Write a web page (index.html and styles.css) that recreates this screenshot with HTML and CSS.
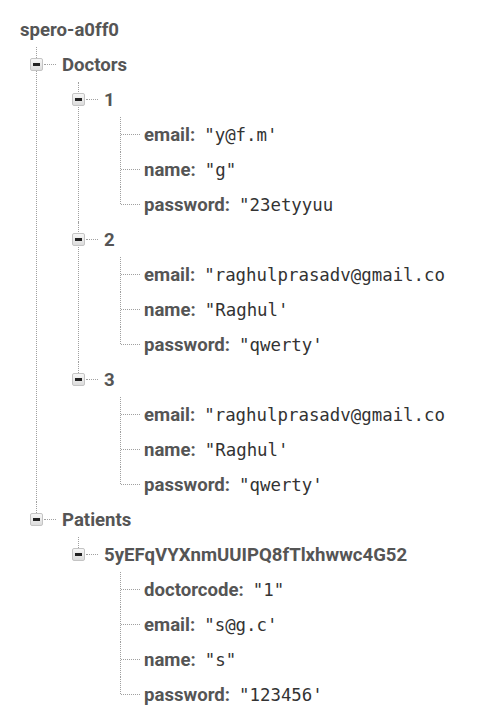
FILE: index.html
```html
<!DOCTYPE html>
<html>
<head>
<meta charset="utf-8">
<link rel="stylesheet" href="styles.css">
</head>
<body>
<div class="tree">
  <div class="row root-row"><span class="key">spero-a0ff0</span></div>
  <ul class="children lvl1">
    <li class="node">
      <div class="row"><span class="toggle"></span><span class="dots"></span><span class="key">Doctors</span></div>
      <ul class="children">
        <li class="node">
          <div class="row"><span class="toggle"></span><span class="dots"></span><span class="key">1</span></div>
          <ul class="children">
            <li class="leaf"><div class="row"><span class="key">email:</span><span class="val">"y@f.m'</span></div></li>
            <li class="leaf"><div class="row"><span class="key">name:</span><span class="val">"g"</span></div></li>
            <li class="leaf"><div class="row"><span class="key">password:</span><span class="val">"23etyyuu</span></div></li>
          </ul>
        </li>
        <li class="node">
          <div class="row"><span class="toggle"></span><span class="dots"></span><span class="key">2</span></div>
          <ul class="children">
            <li class="leaf"><div class="row"><span class="key">email:</span><span class="val">"raghulprasadv@gmail.co</span></div></li>
            <li class="leaf"><div class="row"><span class="key">name:</span><span class="val">"Raghul'</span></div></li>
            <li class="leaf"><div class="row"><span class="key">password:</span><span class="val">"qwerty'</span></div></li>
          </ul>
        </li>
        <li class="node">
          <div class="row"><span class="toggle"></span><span class="dots"></span><span class="key">3</span></div>
          <ul class="children">
            <li class="leaf"><div class="row"><span class="key">email:</span><span class="val">"raghulprasadv@gmail.co</span></div></li>
            <li class="leaf"><div class="row"><span class="key">name:</span><span class="val">"Raghul'</span></div></li>
            <li class="leaf"><div class="row"><span class="key">password:</span><span class="val">"qwerty'</span></div></li>
          </ul>
        </li>
      </ul>
    </li>
    <li class="node">
      <div class="row"><span class="toggle"></span><span class="dots"></span><span class="key">Patients</span></div>
      <ul class="children">
        <li class="node">
          <div class="row"><span class="toggle"></span><span class="dots"></span><span class="key">5yEFqVYXnmUUIPQ8fTlxhwwc4G52</span></div>
          <ul class="children">
            <li class="leaf"><div class="row"><span class="key">doctorcode:</span><span class="val">"1"</span></div></li>
            <li class="leaf"><div class="row"><span class="key">email:</span><span class="val">"s@g.c'</span></div></li>
            <li class="leaf"><div class="row"><span class="key">name:</span><span class="val">"s"</span></div></li>
            <li class="leaf"><div class="row"><span class="key">password:</span><span class="val">"123456'</span></div></li>
          </ul>
        </li>
      </ul>
    </li>
  </ul>
</div>
</body>
</html>
```

FILE: styles.css
```css
html, body {
  margin: 0;
  padding: 0;
  background: #ffffff;
}

.tree {
  padding: 12px 0 0 20px;
  font-family: Roboto, "Liberation Sans", sans-serif;
}

.row {
  height: 35px;
  display: flex;
  align-items: center;
  white-space: nowrap;
}

.key {
  font-weight: 700;
  font-size: 18.6px;
  color: #555555;
}

.val {
  font-family: "DejaVu Sans Mono", "Liberation Mono", monospace;
  font-size: 17.4px;
  color: #333333;
  margin-left: 9px;
}

.children {
  list-style: none;
  margin: 0;
  padding: 0;
  margin-left: 42px;
}

.children.lvl1 {
  margin-left: 10px;
}

.node, .leaf {
  position: relative;
}

.node::before, .leaf::before {
  content: "";
  position: absolute;
  left: 6px;
  top: 0;
  bottom: 0;
  border-left: 1px dotted #a0a0a0;
}

.node:last-child::before, .leaf:last-child::before {
  bottom: auto;
  height: 17px;
}

.leaf::after {
  content: "";
  position: absolute;
  left: 7px;
  top: 17px;
  width: 19px;
  border-top: 1px dotted #a0a0a0;
}

.leaf .row {
  padding-left: 30px;
}

.toggle {
  position: relative;
  z-index: 1;
  box-sizing: border-box;
  width: 13px;
  height: 13px;
  border: 1px solid #c4c4c4;
  border-radius: 2px;
  background: linear-gradient(#f7f7f7, #dcdcdc);
  display: flex;
  align-items: center;
  justify-content: center;
  flex: none;
}

.toggle::after {
  content: "";
  width: 7px;
  height: 3px;
  background: #222222;
}

.dots {
  width: 12px;
  margin: 0 6px 0 1px;
  border-top: 1px dotted #a0a0a0;
  flex: none;
}
```
